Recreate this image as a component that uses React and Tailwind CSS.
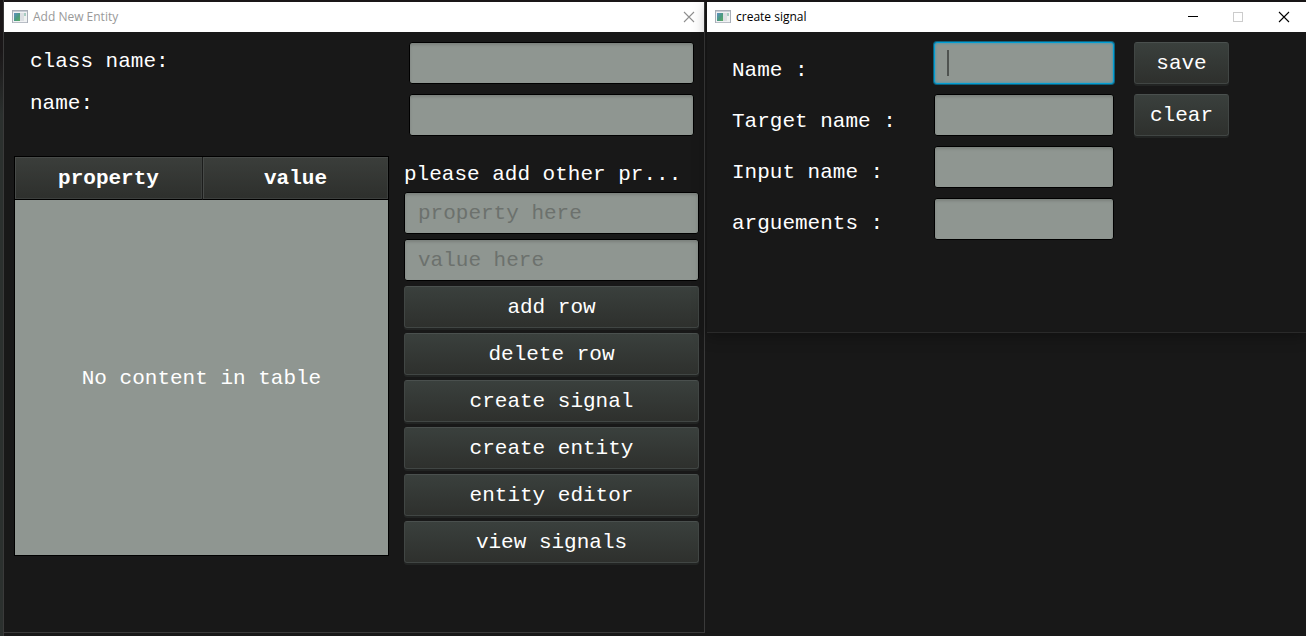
import React from "react";

const FIELD =
  "block h-[42px] w-full rounded-[3px] border border-black bg-[#8f9691] px-[13px] text-[21px] text-[#2b2b2b] shadow-[inset_0_2px_3px_rgba(0,0,0,0.14)] outline-none placeholder:text-[#6c716d] placeholder:opacity-100";
const FOCUSED_FIELD =
  "block h-[42px] w-full rounded-[3px] border border-[#039ed3] bg-[#8f9691] px-[13px] text-[21px] text-[#2b2b2b] shadow-[0_0_0_1px_rgba(3,158,211,0.55),inset_0_0_3px_rgba(3,158,211,0.6)] outline-none";
const BUTTON =
  "block h-[42px] w-full rounded-[3px] border border-[#414644] border-t-[#4a504e] bg-linear-to-b from-[#3a403d] to-[#2e302d] pt-[2px] text-center text-[21px] leading-[24px] text-white shadow-[0_2px_0_#222423]";

function AppIcon() {
  return (
    <svg width="16" height="14" viewBox="0 0 16 14" aria-hidden="true">
      <defs>
        <linearGradient id="pane" x1="0" y1="0" x2="1" y2="1">
          <stop offset="0" stopColor="#5f8fc4" />
          <stop offset="0.55" stopColor="#4a9a80" />
          <stop offset="1" stopColor="#5cab62" />
        </linearGradient>
      </defs>
      <rect x="0.5" y="0.5" width="15" height="12" fill="#f1f2f4" stroke="#a9afb8" />
      <rect x="1" y="1" width="14" height="1" fill="#c9ced6" />
      <rect x="2" y="3" width="6" height="8" fill="url(#pane)" />
      <rect x="8" y="3" width="4" height="8" fill="#dcdfe3" />
      <rect x="12" y="3" width="2" height="8" fill="#eef2f0" />
      <rect x="12" y="3" width="2" height="3" fill="#a9cdc2" />
      <rect x="1" y="12" width="14" height="1" fill="#b9bec6" />
    </svg>
  );
}

function CloseIcon() {
  return (
    <svg width="12" height="12" viewBox="0 0 12 12" fill="none" stroke="currentColor" strokeWidth="1.1" aria-hidden="true">
      <path d="M1 1 11 11M11 1 1 11" />
    </svg>
  );
}

function Field({ id, placeholder }) {
  return <input id={id} type="text" placeholder={placeholder} className={FIELD} />;
}

function EntityWindow() {
  const actions = ["add row", "delete row", "create signal", "create entity", "entity editor", "view signals"];
  return (
    <section className="flex flex-col border-r border-b border-[#3a3a3a] bg-[#181818]">
      <header className="flex h-[30px] items-center bg-white pr-[9px] pl-2 font-['Open_Sans',sans-serif] text-[12px] text-[#999999]">
        <AppIcon />
        <h1 className="ml-[5px] flex-1">Add New Entity</h1>
        <button type="button" aria-label="Close" className="text-[#8f8f8f]">
          <CloseIcon />
        </button>
      </header>

      <div className="flex pt-[10px] pr-[10px] pl-[26px]">
        <div className="flex flex-1 flex-col gap-[18px] pt-[8px]">
          <label htmlFor="class-name">class name:</label>
          <label htmlFor="entity-name">name:</label>
        </div>
        <div className="flex w-[285px] flex-col gap-[10px]">
          <Field id="class-name" />
          <Field id="entity-name" />
        </div>
      </div>

      <div className="flex gap-[15px] pt-5 pr-[5px] pl-[10px]">
        <table className="h-[400px] flex-1 table-fixed border-separate border-spacing-0 border border-black bg-[#8f9691]">
          <thead>
            <tr className="h-[43px] bg-linear-to-b from-[#3b3e3b] to-[#2d2f2c]">
              <th className="w-[188px] border-r border-b border-black border-r-[#1c1d1c] p-0 pt-[2px] shadow-[inset_1px_1px_0_#474a48,inset_-1px_-1px_0_#3c3f3d]">property</th>
              <th className="border-b border-black p-0 pt-[2px] shadow-[inset_1px_1px_0_#474a48,inset_-1px_-1px_0_#3c3f3d]">value</th>
            </tr>
          </thead>
          <tbody>
            <tr>
              <td colSpan={2} className="p-0 pt-[2px] text-center">No content in table</td>
            </tr>
          </tbody>
        </table>
        <div className="flex w-[295px] flex-col gap-[5px] pt-[6px]">
          <p className="h-[25px] truncate leading-[26px]">please add other pr...</p>
          <input type="text" aria-label="property" placeholder="property here" className={FIELD} />
          <input type="text" aria-label="value" placeholder="value here" className={FIELD} />
          {actions.map((label) => (
            <button key={label} type="button" className={BUTTON}>
              {label}
            </button>
          ))}
        </div>
      </div>
    </section>
  );
}

function SignalWindow() {
  return (
    <section className="self-start border-b border-[#2a2a2a] bg-[#181818] pb-[92px] shadow-[0_4px_14px_rgba(0,0,0,0.3)]">
      <header className="flex h-[30px] items-center bg-white pr-4 pl-2 font-['Open_Sans',sans-serif] text-[12px] text-black">
        <AppIcon />
        <h1 className="ml-[5px] flex-1">create signal</h1>
        <div className="flex items-center gap-[35px]">
          <button type="button" aria-label="Minimize">
            <svg width="10" height="10" viewBox="0 0 10 10" aria-hidden="true">
              <rect y="4" width="10" height="1" fill="#000" />
            </svg>
          </button>
          <button type="button" aria-label="Maximize" disabled>
            <svg width="10" height="10" viewBox="0 0 10 10" fill="none" stroke="#cccccc" aria-hidden="true">
              <rect x="0.5" y="0.5" width="9" height="9" />
            </svg>
          </button>
          <button type="button" aria-label="Close">
            <CloseIcon />
          </button>
        </div>
      </header>

      <div className="flex pt-[10px] pl-[25px]">
        <div className="flex w-[202px] flex-col gap-[27px] pt-[17px]">
          <label htmlFor="signal-name">Name :</label>
          <label htmlFor="target-name">Target name :</label>
          <label htmlFor="input-name">Input name :</label>
          <label htmlFor="arguments">arguements :</label>
        </div>
        <div className="flex w-[180px] flex-col gap-[10px]">
          <div className="relative">
            <input id="signal-name" type="text" className={FOCUSED_FIELD} />
            <span className="absolute top-2 left-[13px] h-[26px] w-[2px] bg-[#4f5350]" />
          </div>
          <Field id="target-name" />
          <Field id="input-name" />
          <Field id="arguments" />
        </div>
        <div className="ml-5 flex w-[95px] flex-col gap-[10px]">
          <button type="button" className={BUTTON}>save</button>
          <button type="button" className={BUTTON}>clear</button>
        </div>
      </div>
    </section>
  );
}

export default function App() {
  return (
    <main className="flex min-h-screen bg-[#181818] font-['Liberation_Mono',monospace] text-[21px] leading-[24px] text-white">
      <div className="w-1 border-r border-[#3a3a3a] bg-linear-to-b from-[#1a1718] from-8% via-[#2b302e] via-18% to-[#2b302e]" />
      <div className="grid flex-1 grid-cols-[701fr_599fr] gap-[2px] border-t-2 border-[#1a1718] pb-[3px]">
        <EntityWindow />
        <SignalWindow />
      </div>
    </main>
  );
}
